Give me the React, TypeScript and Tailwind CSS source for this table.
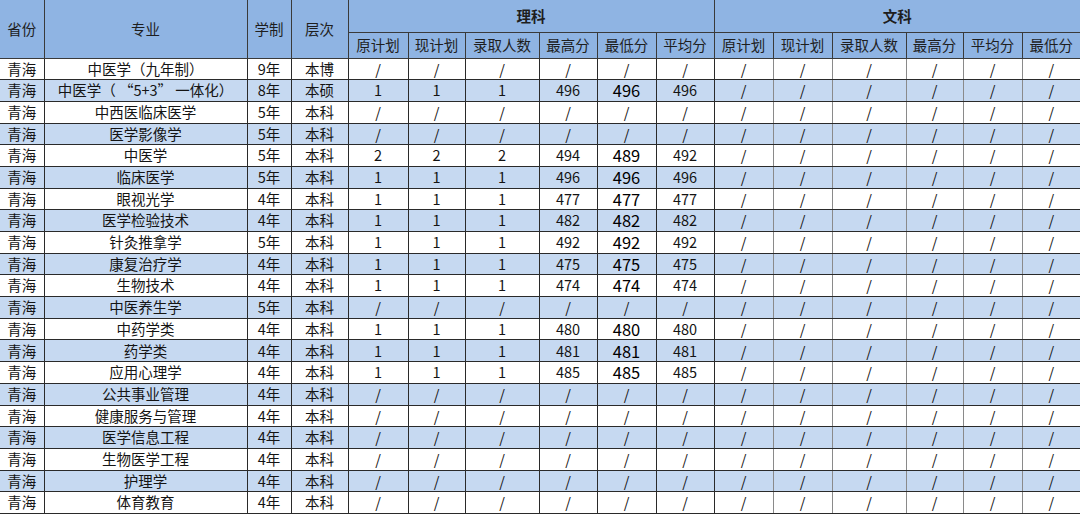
import React from "react";

const widths = [44, 203, 44, 57, 60, 57, 74, 58, 59, 58, 59, 59, 74, 57, 59, 58];

type Row = [string, string, string, string[] | null];

const rows: Row[] = [
  ["中医学（九年制）", "9年", "本博", null],
  ["中医学（ “5+3” 一体化）", "8年", "本硕", ["1", "1", "1", "496", "496", "496"]],
  ["中西医临床医学", "5年", "本科", null],
  ["医学影像学", "5年", "本科", null],
  ["中医学", "5年", "本科", ["2", "2", "2", "494", "489", "492"]],
  ["临床医学", "5年", "本科", ["1", "1", "1", "496", "496", "496"]],
  ["眼视光学", "4年", "本科", ["1", "1", "1", "477", "477", "477"]],
  ["医学检验技术", "4年", "本科", ["1", "1", "1", "482", "482", "482"]],
  ["针灸推拿学", "5年", "本科", ["1", "1", "1", "492", "492", "492"]],
  ["康复治疗学", "4年", "本科", ["1", "1", "1", "475", "475", "475"]],
  ["生物技术", "4年", "本科", ["1", "1", "1", "474", "474", "474"]],
  ["中医养生学", "5年", "本科", null],
  ["中药学类", "4年", "本科", ["1", "1", "1", "480", "480", "480"]],
  ["药学类", "4年", "本科", ["1", "1", "1", "481", "481", "481"]],
  ["应用心理学", "4年", "本科", ["1", "1", "1", "485", "485", "485"]],
  ["公共事业管理", "4年", "本科", null],
  ["健康服务与管理", "4年", "本科", null],
  ["医学信息工程", "4年", "本科", null],
  ["生物医学工程", "4年", "本科", null],
  ["护理学", "4年", "本科", null],
  ["体育教育", "4年", "本科", null],
];

const sub1 = ["原计划", "现计划", "录取人数", "最高分", "最低分", "平均分"];
const sub2 = ["原计划", "现计划", "录取人数", "最高分", "平均分", "最低分"];

export default function App() {
  return (
    <div
      className="w-[1080px] h-[514px] overflow-hidden bg-white text-[#141414]"
      style={{ fontFamily: '"Noto Sans CJK SC", "Noto Sans", sans-serif' }}
    >
      <table className="table-fixed border-collapse w-[1080px] text-[14.5px] leading-none">
        <colgroup>
          {widths.map((w, i) => (
            <col key={i} style={{ width: w }} />
          ))}
        </colgroup>
        <thead className="bg-[#8fb4e3] text-[#1e1e1e]">
          <tr className="h-[32px]">
            <th rowSpan={2} className="font-normal text-[14.5px] border-r border-b border-[#3a3a3a]">省份</th>
            <th rowSpan={2} className="font-normal text-[14.5px] border-r border-b border-[#3a3a3a]">专业</th>
            <th rowSpan={2} className="font-normal text-[14.5px] border-r border-b border-[#3a3a3a]">学制</th>
            <th rowSpan={2} className="font-normal text-[14.5px] border-r border-b border-[#3a3a3a]">层次</th>
            <th colSpan={6} className="font-bold text-[14.5px] border-r border-b border-[#3a3a3a]">理科</th>
            <th colSpan={6} className="font-bold text-[14.5px] border-b border-[#3a3a3a]">文科</th>
          </tr>
          <tr className="h-[26px]">
            {sub1.map((s, i) => (
              <th key={"a" + i} className="font-normal text-[14.5px] border-r border-b border-[#3a3a3a] whitespace-nowrap">
                {s}
              </th>
            ))}
            {sub2.map((s, i) => (
              <th
                key={"b" + i}
                className={`font-normal text-[14.5px] border-b border-[#3a3a3a] whitespace-nowrap ${i < 5 ? "border-r" : ""}`}
              >
                {s}
              </th>
            ))}
          </tr>
        </thead>
        <tbody>
          {rows.map((r, ri) => {
            const li = r[3] ?? ["/", "/", "/", "/", "/", "/"];
            return (
              <tr key={ri} className={`h-[21.7px] ${ri % 2 === 1 ? "bg-[#c6d9f1]" : "bg-white"}`}>
                <td className="text-center border-r border-b border-[#2a2a2a]">青海</td>
                <td className="text-center border-r border-b border-[#2a2a2a] whitespace-nowrap">{r[0]}</td>
                <td className="text-center border-r border-b border-[#2a2a2a]">{r[1]}</td>
                <td className="text-center border-r border-b border-[#2a2a2a]">{r[2]}</td>
                {li.map((v, i) => (
                  <td
                    key={"l" + i}
                    className={`text-center border-r border-b border-[#2a2a2a] ${i === 4 && v !== "/" ? "text-[16.5px] text-black" : ""}`}
                  >
                    {v}
                  </td>
                ))}
                {[0, 1, 2, 3, 4, 5].map((i) => (
                  <td
                    key={"w" + i}
                    className={`text-center border-b border-b-[#2a2a2a] ${i < 5 ? "border-r border-r-[#8a8a8a]" : ""}`}
                  >
                    /
                  </td>
                ))}
              </tr>
            );
          })}
        </tbody>
      </table>
    </div>
  );
}
